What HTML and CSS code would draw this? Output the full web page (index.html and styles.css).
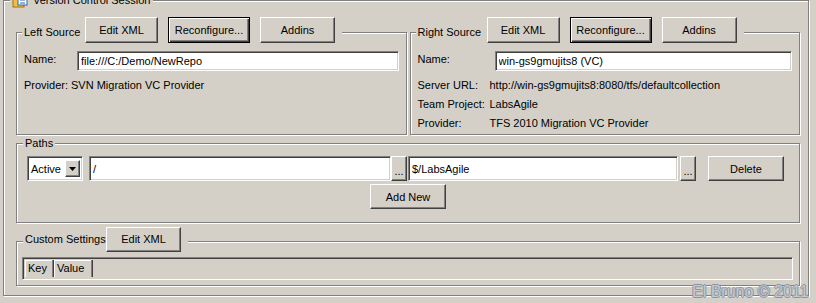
FILE: index.html
```html
<!DOCTYPE html>
<html lang="en">
<head>
<meta charset="UTF-8">
<title>Version Control Session</title>
<link rel="stylesheet" href="styles.css">
</head>
<body>
<fieldset class="group session">
  <legend class="caption session-caption">
    <svg class="session-icon" width="16" height="16" viewBox="0 0 16 16">
      <rect x="1" y="6" width="11" height="9" fill="#f0c040" stroke="#a07010"/>
      <rect x="6" y="1" width="9" height="12" fill="#ffffff" stroke="#3060b0"/>
      <line x1="8" y1="5" x2="13" y2="5" stroke="#3060b0"/>
      <line x1="8" y1="8" x2="13" y2="8" stroke="#3060b0"/>
      <line x1="8" y1="11" x2="13" y2="11" stroke="#3060b0"/>
    </svg>
    <span>Version Control Session</span>
  </legend>

  <div class="sources">
    <fieldset class="group source">
      <legend class="caption">
        <span class="caption-text title-left">Left Source</span>
        <button class="btn btn-edit">Edit XML</button>
        <button class="btn btn-default btn-reconf">Reconfigure...</button>
        <button class="btn btn-addins">Addins</button>
      </legend>
      <div class="props props-left">
        <span class="prop-label">Name:</span>
        <input class="field name-field" type="text" value="file:///C:/Demo/NewRepo">
        <span class="prop-label">Provider:</span>
        <span class="prop-value">SVN Migration VC Provider</span>
      </div>
    </fieldset>

    <fieldset class="group source">
      <legend class="caption">
        <span class="caption-text title-right">Right Source</span>
        <button class="btn btn-edit">Edit XML</button>
        <button class="btn btn-default btn-reconf">Reconfigure...</button>
        <button class="btn btn-addins">Addins</button>
      </legend>
      <div class="props props-right">
        <span class="prop-label">Name:</span>
        <input class="field name-field" type="text" value="win-gs9gmujits8 (VC)">
        <span class="prop-label">Server URL:</span>
        <span class="prop-value">http://win-gs9gmujits8:8080/tfs/defaultcollection</span>
        <span class="prop-label">Team Project:</span>
        <span class="prop-value">LabsAgile</span>
        <span class="prop-label">Provider:</span>
        <span class="prop-value">TFS 2010 Migration VC Provider</span>
      </div>
    </fieldset>
  </div>

  <fieldset class="group paths">
    <legend class="caption plain-caption">Paths</legend>
    <div class="path-row">
      <div class="combo">
        <span class="combo-text">Active</span>
        <span class="combo-arrow"><svg width="7" height="4" viewBox="0 0 7 4"><path d="M0 0h7L3.5 4z" fill="#000"/></svg></span>
      </div>
      <input class="field path-source" type="text" value="/">
      <button class="btn browse">...</button>
      <input class="field path-target" type="text" value="$/LabsAgile">
      <button class="btn browse browse-target">...</button>
      <button class="btn btn-delete">Delete</button>
    </div>
    <div class="add-row">
      <button class="btn btn-add">Add New</button>
    </div>
  </fieldset>

  <fieldset class="group custom">
    <legend class="caption">
      <span class="caption-text title-custom">Custom Settings</span>
      <button class="btn btn-custom-edit">Edit XML</button>
    </legend>
    <div class="grid">
      <div class="grid-head">
        <span class="head-cell cell-key">Key</span>
        <span class="head-cell cell-value">Value</span>
      </div>
    </div>
  </fieldset>
</fieldset>

<div class="watermark">El Bruno © 2011</div>
</body>
</html>
```

FILE: styles.css
```css
body {
  margin: 0;
  height: 303px;
  overflow: hidden;
  position: relative;
  background: #d4d0c8;
  font-family: "Liberation Sans", Arial, sans-serif;
  font-size: 11px;
  color: #000;
}

/* etched group box */
.group {
  margin: 0;
  min-width: 0;
  border: 1px solid #808080;
  box-shadow: 1px 1px 0 #fff, inset 1px 1px 0 #fff;
}
.caption {
  display: flex;
  align-items: flex-start;
  background: #d4d0c8;
  margin-left: -2px;
  padding: 0 7px 4px 2px;
  line-height: 13px;
}
.caption-text {
  margin-top: 9px;
}

.session {
  box-sizing: border-box;
  width: 806px;
  margin: -8px 0 0 3px;
  padding: 9px 8px 9px 12px;
}
.session-caption {
  margin-left: -6px;
  padding: 0 3px 0 2px;
  align-items: center;
  line-height: 16px;
}
.session-icon {
  margin-right: 5px;
}

/* sources */
.sources {
  display: flex;
  gap: 3px;
}
.source {
  flex: 1;
  padding: 0 7px 2px 7px;
}
.title-left { width: 61px; }
.title-right { width: 69px; }

.props {
  display: grid;
  grid-template-rows: 24px;
  grid-auto-rows: 19px;
  margin-top: 4px;
  align-items: center;
}
.props-left { grid-template-columns: 47px 1fr; }
.props-right { grid-template-columns: 72px 1fr; }
.prop-label, .prop-value {
  white-space: nowrap;
}
.props .prop-label:first-child {
  align-self: start;
  padding-top: 2px;
}
.name-field {
  align-self: start;
  margin-left: 6px;
}
.props-right .name-field {
  margin-left: 5px;
}

/* buttons */
.btn {
  box-sizing: border-box;
  height: 26px;
  margin: 0 10px 0 0;
  padding: 0;
  font: inherit;
  color: #000;
  background: #d4d0c8;
  border: 1px solid;
  border-color: #fff #404040 #404040 #fff;
  box-shadow: inset -1px -1px 0 #808080;
}
.btn:last-child { margin-right: 0; }
.btn-edit { width: 73px; }
.btn-reconf { width: 82px; }
.btn-addins { width: 75px; }
.btn-default {
  border-color: #000;
  box-shadow: inset 1px 1px 0 #fff, inset -1px -1px 0 #404040, inset -2px -2px 0 #808080;
}

/* text fields */
.field {
  box-sizing: border-box;
  height: 20px;
  padding: 0 3px;
  font: inherit;
  color: #000;
  background: #fff;
  border: 1px solid;
  border-color: #808080 #fff #fff #808080;
  box-shadow: inset 1px 1px 0 #404040, inset -1px -1px 0 #d4d0c8;
  outline: none;
}

/* paths */
.paths {
  margin-top: 1px;
  padding: 6px 10px 13px 10px;
}
.plain-caption {
  display: block;
  margin-left: -4px;
  padding: 0 2px;
  line-height: 14px;
}
.path-row {
  display: flex;
  align-items: flex-start;
}
.combo {
  box-sizing: border-box;
  display: flex;
  align-items: center;
  justify-content: space-between;
  width: 56px;
  height: 25px;
  margin-right: 6px;
  padding: 2px;
  background: #fff;
  border: 1px solid;
  border-color: #808080 #fff #fff #808080;
  box-shadow: inset 1px 1px 0 #404040, inset -1px -1px 0 #d4d0c8;
}
.combo-text {
  padding-left: 1px;
}
.combo-arrow {
  box-sizing: border-box;
  display: flex;
  align-items: center;
  justify-content: center;
  width: 15px;
  height: 17px;
  background: #d4d0c8;
  border: 1px solid;
  border-color: #fff #404040 #404040 #fff;
  box-shadow: inset -1px -1px 0 #808080;
}
.path-row .field {
  height: 25px;
}
.path-source { width: 302px; }
.path-target { width: 270px; margin-left: 1px; }
.browse {
  width: 16px;
  height: 25px;
  margin: 0;
  padding-top: 6px;
  line-height: 11px;
}
.browse-target {
  margin: 0 12px 0 2px;
}
.btn-delete {
  width: 76px;
  height: 25px;
}
.add-row {
  display: flex;
  justify-content: center;
  margin-top: 3px;
}
.btn-add {
  width: 76px;
  height: 25px;
}

/* custom settings */
.custom {
  margin-top: 4px;
  padding: 2px 6px 5px 5px;
}
.custom .caption {
  margin-left: 1px;
  padding-bottom: 3px;
}
.title-custom {
  width: 81px;
  margin-top: 6px;
}
.btn-custom-edit {
  width: 75px;
  height: 25px;
}
.grid {
  box-sizing: border-box;
  height: 23px;
  border: 1px solid;
  border-color: #808080 #fff #fff #808080;
  box-shadow: inset 1px 1px 0 #404040, inset -1px -1px 0 #d4d0c8;
  padding: 2px;
}
.grid-head {
  display: flex;
  height: 17px;
}
.head-cell {
  box-sizing: border-box;
  height: 17px;
  padding: 2px 3px 0 3px;
  border-right: 1px solid #808080;
  box-shadow: inset 1px 1px 0 #fff, 1px 0 0 #404040;
}
.cell-key { width: 28px; }
.cell-value { width: 38px; margin-left: 1px; }

/* overlay text */
.watermark {
  position: absolute;
  left: 692px;
  top: 283px;
  font-size: 16px;
  line-height: 17px;
  color: #c6c8cc;
  text-shadow: 1px 0 0 #8a96a4, -1px 0 0 #8a96a4, 0 1px 0 #8a96a4, 0 -1px 0 #8a96a4;
  white-space: nowrap;
}
```
